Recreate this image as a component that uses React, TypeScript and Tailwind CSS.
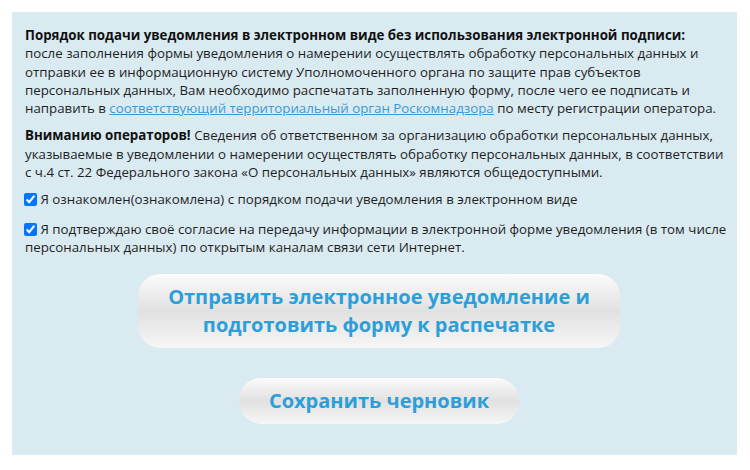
import React from "react";

export default function App() {
  return (
    <div className="w-[750px] h-[470px] bg-white pt-[12px] pl-[12px]" style={{ fontFamily: '"Open Sans", "Liberation Sans", sans-serif' }}>
      <div className="w-[725px] h-[443px] bg-[#d9eaf1] pt-[14px] pl-[13px] pr-[7px] text-[13.3px] leading-[18.3px] text-[#1f1f1f]">
        <p>
          <b className="font-bold text-[#111]">Порядок подачи уведомления в электронном виде без использования электронной подписи:</b>
          <br />
          после заполнения формы уведомления о намерении осуществлять обработку персональных данных и отправки ее в информационную систему Уполномоченного органа по защите прав субъектов персональных данных, Вам необходимо распечатать заполненную форму, после чего ее подписать и направить в{" "}
          <a href="#" className="text-[#3a9ad3] underline">соответствующий территориальный орган Роскомнадзора</a>{" "}
          по месту регистрации оператора.
        </p>
        <p className="mt-[9px]">
          <b className="font-bold text-[#111]">Вниманию операторов!</b> Сведения об ответственном за организацию обработки персональных данных, указываемые в уведомлении о намерении осуществлять обработку персональных данных, в соответствии с ч.4 ст. 22 Федерального закона «О персональных данных» являются общедоступными.
        </p>
        <label className="block mt-[9px]">
          <input type="checkbox" defaultChecked className="w-[13px] h-[13px] align-[-2px] mr-0 ml-[-1px]" /> Я ознакомлен(ознакомлена) с порядком подачи уведомления в электронном виде
        </label>
        <label className="block mt-[11px]">
          <input type="checkbox" defaultChecked className="w-[13px] h-[13px] align-[-2px] mr-0 ml-[-1px]" /> Я подтверждаю своё согласие на передачу информации в электронной форме уведомления (в том числе персональных данных) по открытым каналам связи сети Интернет.
        </label>
        <div className="flex flex-col items-center pl-[3px] mt-[18px]">
          <button className="w-[482px] h-[74px] rounded-[22px] bg-[linear-gradient(to_bottom,#fbfbfb_0%,#e1e1e1_50%,#f6f6f6_100%)] text-[#2c9fda] font-bold text-[20px] leading-[28px] px-[10px]">
            Отправить электронное уведомление и<br />подготовить форму к распечатке
          </button>
          <button className="mt-[30px] w-[280px] h-[46px] rounded-[22px] bg-[linear-gradient(to_bottom,#fbfbfb_0%,#e1e1e1_50%,#f6f6f6_100%)] text-[#2c9fda] font-bold text-[20px] leading-[28px]">
            Сохранить черновик
          </button>
        </div>
      </div>
    </div>
  );
}
